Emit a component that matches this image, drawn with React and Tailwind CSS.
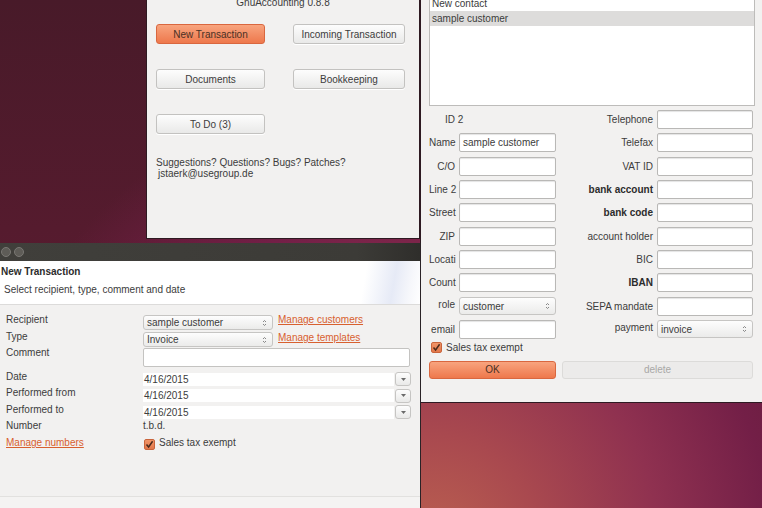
import React from "react";

function Btn({ children, primary, disabled, className = "" }) {
  let look = "border-[#c3c2c0] bg-[linear-gradient(#fdfdfd,#e9e9e8)] text-[#3c3c3c] shadow-[0_1px_0_#ffffff]";
  if (primary) look = "border-[#d9673f] bg-[linear-gradient(#f8a47e,#ee784c)] text-[#4a3024]";
  if (disabled) look = "border-[#dcdbd9] bg-[#ecebea] text-[#a9a8a6]";
  return (
    <div className={`flex items-center justify-center rounded-[3px] border ${look} ${className}`}>
      {children}
    </div>
  );
}

function Arrows() {
  return (
    <svg width="5" height="8" viewBox="0 0 5 8" className="shrink-0">
      <path d="M1 3 L2.5 1.5 L4 3" fill="none" stroke="#7a7a7a" strokeWidth="0.9" />
      <path d="M1 5 L2.5 6.5 L4 5" fill="none" stroke="#7a7a7a" strokeWidth="0.9" />
    </svg>
  );
}

function Combo({ value, className = "" }) {
  return (
    <div className={`flex items-center justify-between rounded-[3px] border border-[#c6c5c3] bg-[linear-gradient(#fdfdfd,#ebebea)] pl-[3px] pr-[5px] ${className}`}>
      <span>{value}</span>
      <Arrows />
    </div>
  );
}

function Check() {
  return (
    <div className="flex h-[11px] w-[11px] items-center justify-center rounded-[2px] border border-[#c9643b] bg-[linear-gradient(#f19568,#e2774a)]">
      <svg width="9" height="9" viewBox="0 0 9 9">
        <path d="M1.5 4.5 L3.6 7 L7.6 1.3" fill="none" stroke="#4a2a1c" strokeWidth="1.5" />
      </svg>
    </div>
  );
}

function Field({ className = "", children }) {
  return (
    <div className={`flex h-[19px] items-center rounded-[2px] border border-[#b9b8b6] bg-white pl-[3px] shadow-[inset_0_1px_1px_#e4e4e4] ${className}`}>
      {children}
    </div>
  );
}

function DateRow({ label, value, h }) {
  return (
    <div className={`flex ${h}`}>
      <div className="w-[137px] leading-[10px]">{label}</div>
      <div className="flex h-[15px] w-[268px] items-center">
        <div className="flex h-[13px] w-[251px] items-center bg-white pl-[1px]">{value}</div>
        <div className="ml-[1px] flex h-[14px] w-[16px] items-center justify-center rounded-[3px] border border-[#c6c5c3] bg-[linear-gradient(#fdfdfd,#e9e9e8)]">
          <svg width="5" height="3" viewBox="0 0 5 3">
            <path d="M0 0 L5 0 L2.5 3 Z" fill="#6a6a6a" />
          </svg>
        </div>
      </div>
    </div>
  );
}

const left = ["Name", "C/O", "Line 2", "Street", "ZIP", "Locati", "Count", "role", "email"];
const right = [
  ["Telephone", false],
  ["Telefax", false],
  ["VAT ID", false],
  ["bank account", true],
  ["bank code", true],
  ["account holder", false],
  ["BIC", false],
  ["IBAN", true],
  ["SEPA mandate", false],
  ["payment", false],
];

export default function App() {
  const rows = [];
  for (let i = 0; i < 10; i++) {
    const [rl, bold] = right[i];
    const lift = rl === "payment" ? "-mt-[3px]" : "";
    rows.push(
      <React.Fragment key={i}>
        {i === 0 ? (
          <div className="col-span-2 pl-[16px]">ID 2</div>
        ) : (
          <>
            <div className={`whitespace-nowrap pr-[4px] text-right ${left[i - 1] === "role" ? "-mt-[3px]" : ""}`}>
              {left[i - 1]}
            </div>
            {left[i - 1] === "role" ? (
              <Combo value="customer" className="h-[18px]" />
            ) : (
              <Field>{left[i - 1] === "Name" ? "sample customer" : ""}</Field>
            )}
          </>
        )}
        <div className={`whitespace-nowrap pr-[4px] text-right ${lift} ${bold ? "font-bold text-[#2c2c2c]" : ""}`}>{rl}</div>
        {rl === "payment" ? <Combo value="invoice" className="h-[18px]" /> : <Field />}
      </React.Fragment>
    );
  }

  return (
    <div className="relative h-[508px] w-[762px] overflow-hidden bg-[radial-gradient(circle_at_430px_545px,#bb6150_0px,#a9494f_110px,#8f3150_230px,#731f47_340px,rgba(100,28,60,0)_470px),linear-gradient(180deg,#481a29_0%,#551b2e_45%,#641d36_100%)] font-['Liberation_Sans',Arial,sans-serif] text-[10px] text-[#3c3c3c]">
      {/* main window */}
      <div className="absolute left-[146px] top-[-12px] h-[251px] w-[274px] border border-[#2e1a22] bg-[#f2f1f0]">
        <div className="pt-[8px] text-center leading-[12px]">GnuAccounting 0.8.8</div>
        <div className="mt-[15px] grid grid-cols-[109px_112px] gap-x-[28px] gap-y-[25px] pl-[9px]">
          <Btn primary className="h-[20px]">New Transaction</Btn>
          <Btn className="h-[20px]">Incoming Transaction</Btn>
          <Btn className="h-[20px]">Documents</Btn>
          <Btn className="h-[20px]">Bookkeeping</Btn>
          <Btn className="h-[20px]">To Do (3)</Btn>
        </div>
        <div className="mt-[23px] pl-[9px] leading-[11px]">
          <div>Suggestions? Questions? Bugs? Patches?</div>
          <div className="pl-[2px]">jstaerk@usegroup.de</div>
        </div>
      </div>

      {/* contact window */}
      <div className="absolute left-[420px] top-[-7px] h-[410px] w-[342px] border-b border-l border-[#2e1a22] bg-[#f2f1f0] pl-[8px] pr-[7px] pt-[2px]">
        <div className="h-[111px] border border-[#bdbcba] bg-white">
          <div className="flex h-[15px] items-center pl-[2px]">New contact</div>
          <div className="flex h-[15px] items-center bg-[#dddcdb] pl-[2px]">sample customer</div>
        </div>
        <div className="mt-[2px] grid grid-cols-[30px_97px_101px_96px] auto-rows-[23.3px] items-center">
          {rows}
        </div>
        <div className="flex h-[14px] items-center gap-[4px] pl-[2px]">
          <Check />
          <span>Sales tax exempt</span>
        </div>
        <div className="mt-[6px] flex gap-[6px]">
          <Btn primary className="h-[18px] w-[127px]">OK</Btn>
          <Btn disabled className="h-[18px] w-[191px]">delete</Btn>
        </div>
      </div>

      {/* new transaction window */}
      <div className="absolute left-0 top-[243px] h-[265px] w-[421px] border-r border-[#2a2226] bg-[#f2f1f0]">
        <div className="flex h-[18px] items-center gap-[3px] bg-[linear-gradient(90deg,#403f3b_0%,#3c3b37_85%,#2f2e2b_100%)] pl-[1px]">
          <div className="h-[10px] w-[10px] rounded-full border border-[#7a7874] bg-[#5e5c57]" />
          <div className="h-[10px] w-[10px] rounded-full border border-[#7a7874] bg-[#5e5c57]" />
        </div>
        <div className="h-[44px] border-b border-[#dcdbda] bg-[linear-gradient(100deg,#ffffff_86%,#e6eaf6_93%,#f6f7fb_97%,#ffffff_100%)]">
          <div className="pl-[1px] pt-[5px] font-bold leading-[12px] text-[#2c2c2c]">New Transaction</div>
          <div className="mt-[6px] pl-[4px] leading-[12px]">Select recipient, type, comment and date</div>
        </div>
        <div className="pl-[6px] pt-[10px]">
          <div className="flex h-[17px]">
            <div className="w-[137px] leading-[10px]">Recipient</div>
            <Combo value="sample customer" className="h-[15px] w-[130px]" />
            <span className="ml-[5px] leading-[10px] text-[#d8602f] underline">Manage customers</span>
          </div>
          <div className="flex h-[16px]">
            <div className="w-[137px] leading-[10px]">Type</div>
            <Combo value="Invoice" className="h-[15px] w-[130px]" />
            <span className="ml-[5px] mt-[1px] leading-[10px] text-[#d8602f] underline">Manage templates</span>
          </div>
          <div className="flex h-[23.5px]">
            <div className="w-[137px] leading-[10px]">Comment</div>
            <div className="h-[19px] w-[267px] rounded-[2px] border border-[#c4c3c1] bg-white" />
          </div>
          <DateRow label="Date" value="4/16/2015" h="h-[16.5px]" />
          <DateRow label="Performed from" value="4/16/2015" h="h-[16.5px]" />
          <DateRow label="Performed to" value="4/16/2015" h="h-[16.5px]" />
          <div className="flex h-[17px]">
            <div className="w-[137px] leading-[10px]">Number</div>
            <div className="leading-[10px]">t.b.d.</div>
          </div>
          <div className="flex h-[14px]">
            <div className="w-[137px] leading-[10px] text-[#d8602f] underline">Manage numbers</div>
            <div className="ml-[1px] mt-[1px]">
              <Check />
            </div>
            <span className="ml-[4px] leading-[10px]">Sales tax exempt</span>
          </div>
        </div>
        <div className="mt-[44px] h-[13px] border-t border-[#e2e1df] bg-[#f4f3f2]" />
      </div>
    </div>
  );
}
